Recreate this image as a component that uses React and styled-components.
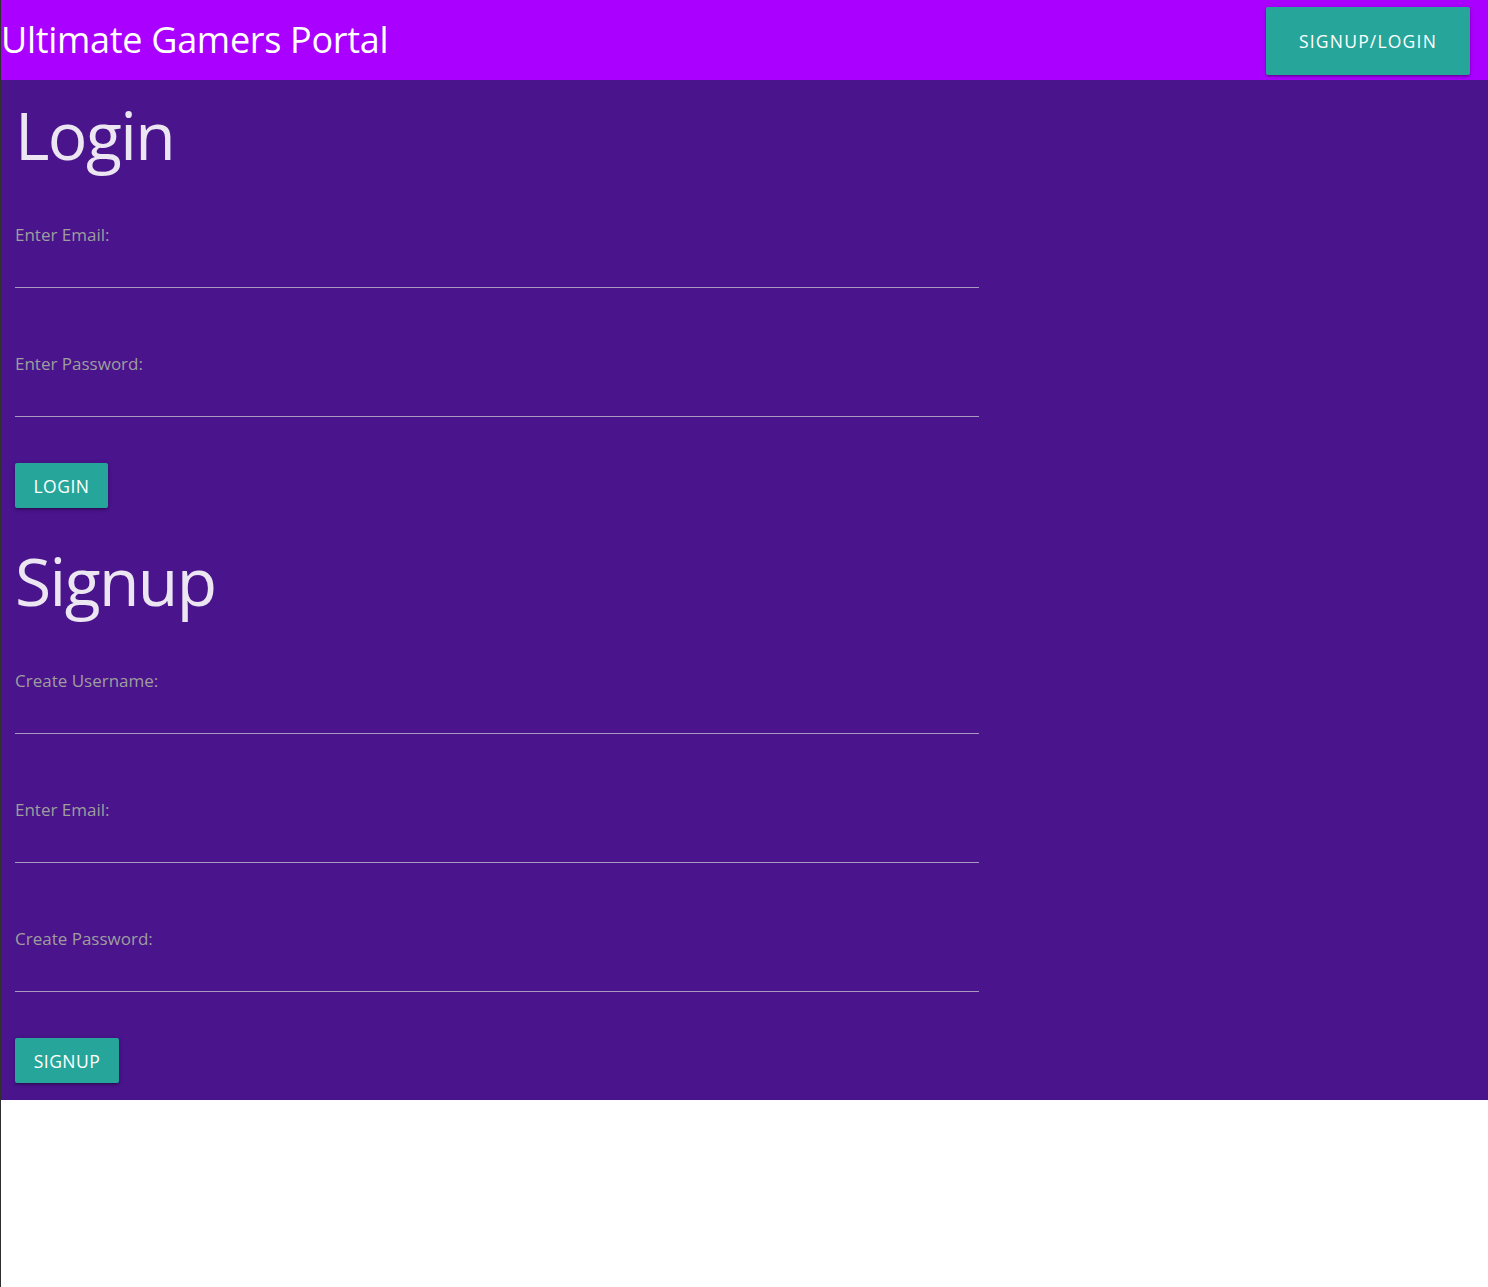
import React from "react";
import styled, { createGlobalStyle } from "styled-components";

const Global = createGlobalStyle`
  html, body { margin: 0; padding: 0; background: #ffffff; }
  body { font-family: "Open Sans", "Noto Sans", sans-serif; }
  #root { min-height: 100vh; border-left: 1px solid #2f2f2f; box-sizing: border-box; }
  * { box-sizing: border-box; }
`;

const Header = styled.header`
  display: flex;
  justify-content: space-between;
  align-items: flex-start;
  height: 80px;
  background: #aa00ff;
  padding-right: 18px;
`;

const Brand = styled.div`
  color: #ffffff;
  font-size: 36px;
  line-height: 80px;
  padding-left: 0;
  letter-spacing: -0.3px;
`;

const Button = styled.button`
  border: none;
  border-radius: 2px;
  background: #26a69a;
  color: #ffffff;
  font-family: inherit;
  font-size: 17.5px;
  letter-spacing: ${(p) => (p.$large ? "1.2px" : "0.5px")};
  text-transform: uppercase;
  box-shadow: 0 2px 2px 0 rgba(0,0,0,0.14), 0 3px 1px -2px rgba(0,0,0,0.12), 0 1px 5px 0 rgba(0,0,0,0.2);
  height: ${(p) => (p.$large ? "68px" : "45px")};
  width: ${(p) => p.$w}px;
  margin-top: ${(p) => p.$mt || 0}px;
  padding: 0;
  cursor: pointer;
`;

const Main = styled.main`
  background: #4a148c;
  padding: 0 14px 17px;
`;

const Heading = styled.h1`
  margin: ${(p) => p.$mt}px 0 0;
  font-size: 66px;
  font-weight: 400;
  line-height: 80px;
  letter-spacing: -1.6px;
  color: #ece6f3;
`;

const Field = styled.div`
  display: flex;
  flex-direction: column;
  width: 964px;
  margin-top: ${(p) => p.$mt}px;
`;

const Label = styled.label`
  font-size: 17px;
  line-height: 20px;
  color: #9e9e9e;
`;

const Input = styled.input`
  height: 43px;
  border: none;
  border-bottom: 1px solid #a99bc0;
  background: transparent;
  outline: none;
  color: #fff;
  font-size: 17px;
  font-family: inherit;
`;

const Section = styled.section`
  display: flex;
  flex-direction: column;
  align-items: flex-start;
`;

function FormField({ label, type, mt }) {
  return (
    <Field $mt={mt}>
      <Label>{label}</Label>
      <Input type={type} />
    </Field>
  );
}

export default function App() {
  return (
    <>
      <Global />
      <Header>
        <Brand>Ultimate Gamers Portal</Brand>
        <Button $large $w={204} $mt={7}>Signup/Login</Button>
      </Header>
      <Main>
        <Section>
          <Heading $mt={14}>Login</Heading>
          <FormField label="Enter Email:" type="email" mt={51} />
          <FormField label="Enter Password:" type="password" mt={66} />
          <Button $w={93} $mt={46}>Login</Button>
        </Section>
        <Section>
          <Heading $mt={32}>Signup</Heading>
          <FormField label="Create Username:" type="text" mt={51} />
          <FormField label="Enter Email:" type="email" mt={66} />
          <FormField label="Create Password:" type="password" mt={66} />
          <Button $w={104} $mt={46}>Signup</Button>
        </Section>
      </Main>
    </>
  );
}
